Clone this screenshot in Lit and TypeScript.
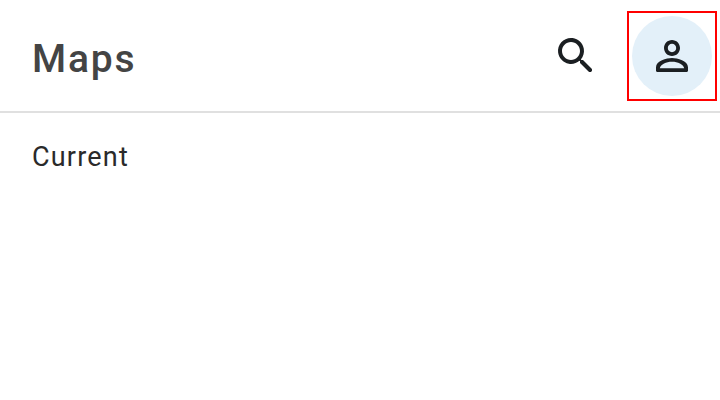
import { css, html, LitElement } from 'lit'
import { customElement } from 'lit/decorators.js'

@customElement('app-root')
export class AppRoot extends LitElement {
  static override styles = css`
    :host {
      display: block;
      width: 720px;
      height: 400px;
      background: #fff;
      font-family: Roboto, sans-serif;
      overflow: hidden;
    }

    .header {
      display: flex;
      align-items: center;
      height: 111px;
      padding: 0 3px 0 32px;
      border-bottom: 2px solid #e0e0e0;
      box-sizing: content-box;
    }

    .title {
      flex: 1;
      margin: 0;
      padding-top: 6px;
      font-size: 39px;
      font-weight: 500;
      letter-spacing: 1.8px;
      color: #444;
    }

    .search {
      display: flex;
      margin-right: 27px;
    }

    .account {
      display: flex;
      align-items: center;
      justify-content: center;
      width: 90px;
      height: 90px;
      box-sizing: border-box;
      border: 2px solid #f00;
      margin-top: 1px;
    }

    .avatar {
      display: flex;
      align-items: center;
      justify-content: center;
      width: 80px;
      height: 80px;
      border-radius: 50%;
      background: #e3f0f9;
    }

    svg {
      display: block;
      width: 48px;
      height: 48px;
      fill: #1b1f22;
    }

    .section {
      padding: 28px 32px 0;
      font-size: 27px;
      letter-spacing: 1.2px;
      color: #2a2a2a;
    }
  `

  override render() {
    return html`
      <div class="header">
        <h1 class="title">Maps</h1>
        <div class="search">
          <svg viewBox="0 0 24 24">
            <path d="M15.5 14h-.79l-.28-.27c1.2-1.4 1.82-3.31 1.48-5.34-.47-2.78-2.79-5-5.59-5.34-4.2-.53-7.79 3.04-7.26 7.24.34 2.8 2.56 5.12 5.34 5.59 2.03.34 3.94-.28 5.34-1.48l.27.28v.79l4.25 4.25c.41.41 1.08.41 1.49 0 .41-.41.41-1.08 0-1.49L15.5 14zm-6 0C7.01 14 5 11.99 5 9.5S7.01 5 9.5 5 14 7.01 14 9.5 11.99 14 9.5 14z"></path>
          </svg>
        </div>
        <div class="account">
          <div class="avatar">
            <svg viewBox="0 0 24 24">
              <path d="M12 5.9c1.16 0 2.1.94 2.1 2.1s-.94 2.1-2.1 2.1S9.9 9.16 9.9 8s.94-2.1 2.1-2.1m0 9c2.97 0 5.6 1.3 6.1 3.2H5.9c.5-1.9 3.13-3.2 6.1-3.2M12 4C9.79 4 8 5.79 8 8s1.79 4 4 4 4-1.79 4-4-1.79-4-4-4zm0 9c-2.67 0-8 1.34-8 4.6v1.8c0 .33.27.6.6.6h14.8c.33 0 .6-.27.6-.6v-1.8c0-3.26-5.33-4.6-8-4.6z"></path>
            </svg>
          </div>
        </div>
      </div>
      <div class="section">Current</div>
    `
  }
}
